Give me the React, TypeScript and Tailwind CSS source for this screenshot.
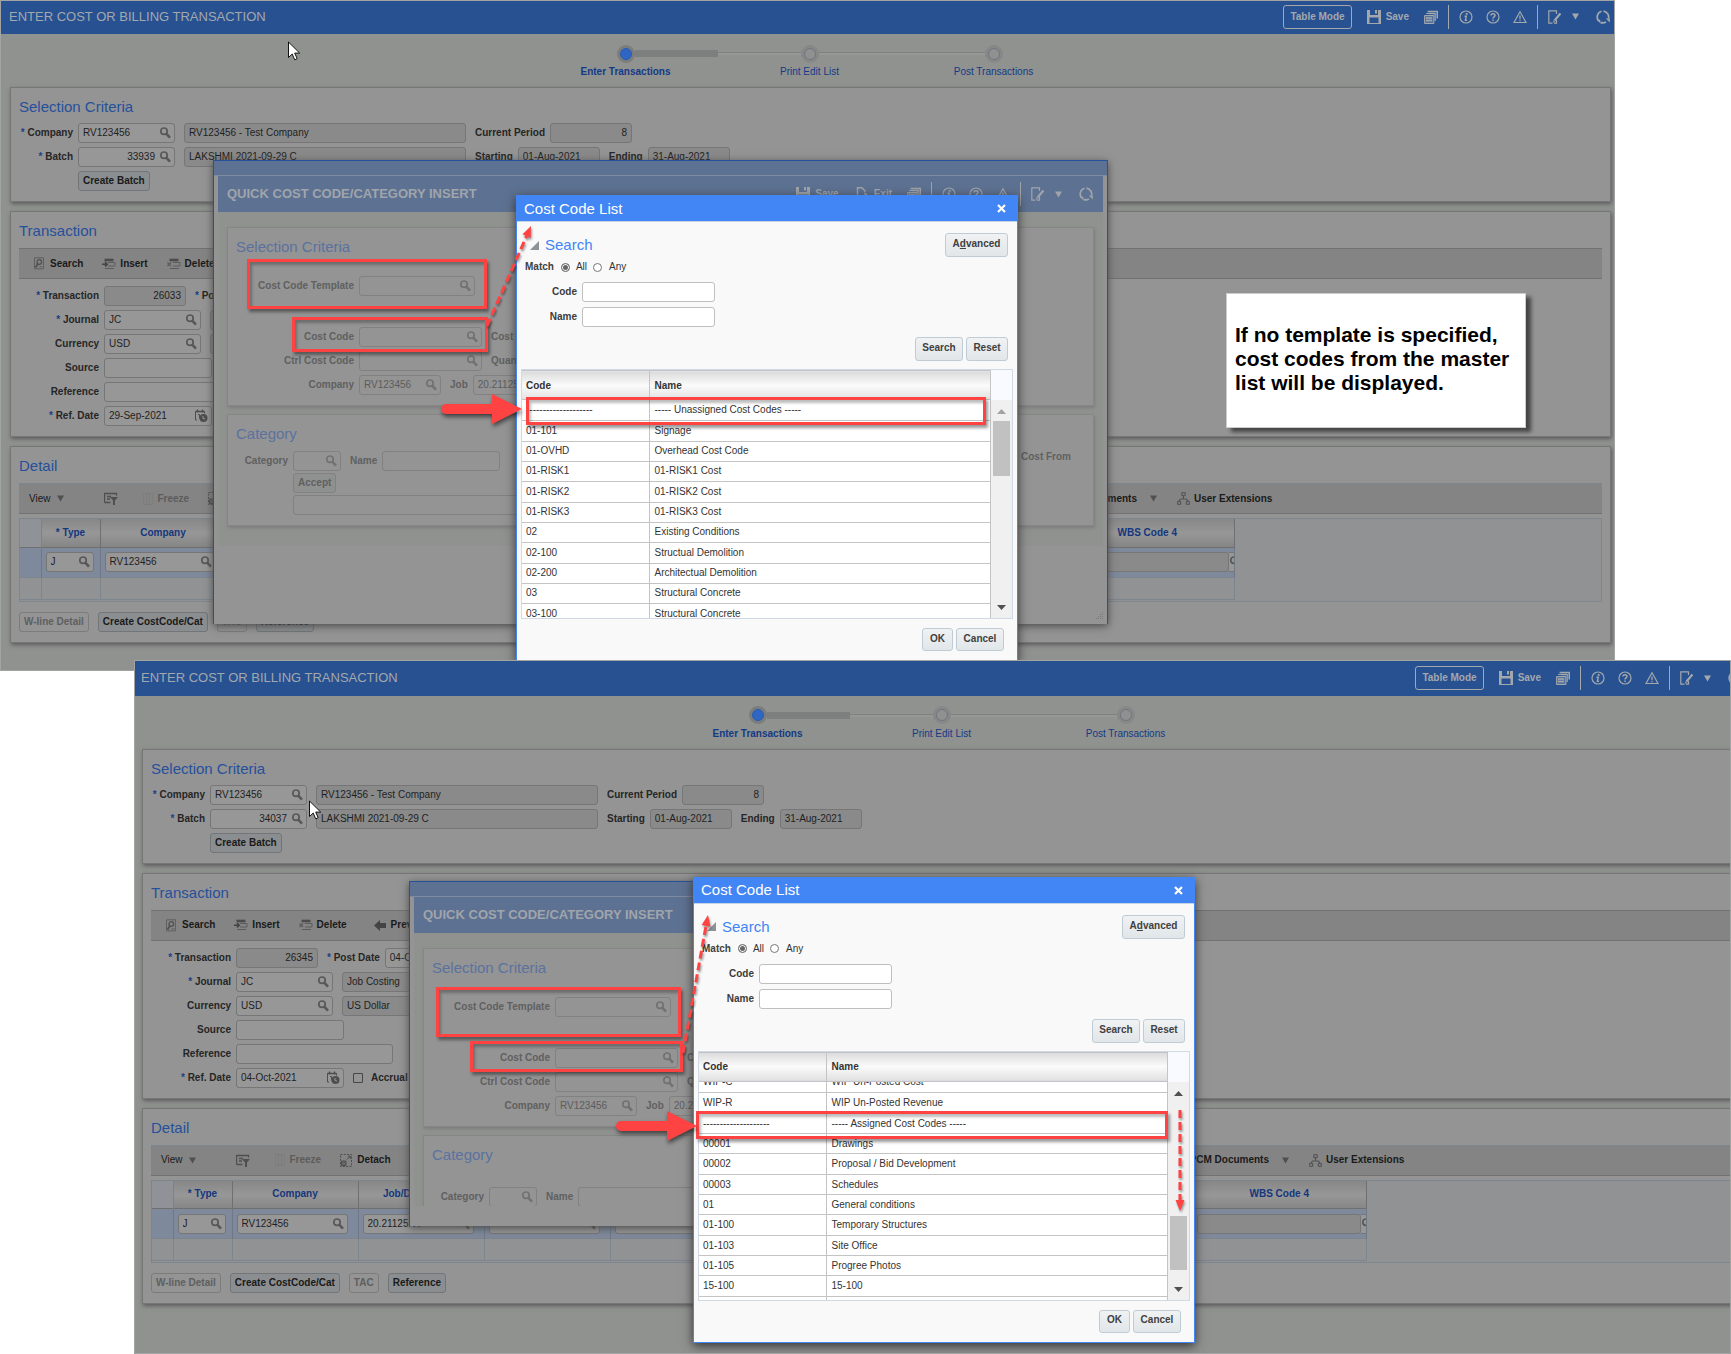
import React, { useId } from 'react';
import clsx from 'clsx';

/* ---------- icons ---------- */

const SearchIcon = ({ className = 'text-[#585858]' }: { className?: string }) => (
  <svg width="12" height="12" viewBox="0 0 12 12" className={clsx('shrink-0', className)} fill="none" stroke="currentColor">
    <circle cx="5" cy="4.200" r="3.200" strokeWidth="1.700" />
    <path d="M7.200 6.600 11 10.600" strokeWidth="2.600" />
  </svg>
);

const CalendarIcon = () => (
  <svg width="14" height="14" viewBox="0 0 14 14" className="shrink-0 text-[#4e4e4e]" fill="none" stroke="currentColor">
    <path d="M3 11H1.500V2.500h9v2" />
    <path d="M1.500 2.500h9M3.500.5v3M8.500.5v3" strokeWidth="1.500" />
    <path d="M4 5.500h1.500v4" />
    <circle cx="9.500" cy="9" r="4" fill="currentColor" stroke="none" />
    <path d="M9 7v2.300l2 .8" stroke="#999" />
  </svg>
);

const SaveIcon = () => (
  <svg width="14" height="14" viewBox="0 0 14 14" fill="currentColor">
    <path fillRule="evenodd" d="M0 0h14v14H0zM3 0v5h8V0h-1v3.500H8V0zM2.500 7.500V13h9V7.500z" />
  </svg>
);

const ExitIcon = () => (
  <svg width="14" height="14" viewBox="0 0 14 14" fill="none" stroke="currentColor">
    <path d="M9 5V4L6 .8H1.500v12.400H7" strokeWidth="1.400" />
    <path d="M5.500 8h3V5l5 4.500-5 4.500v-3h-3z" fill="currentColor" stroke="none" />
  </svg>
);

const StackIcon = () => (
  <svg width="14" height="14" viewBox="0 0 14 14" fill="none" stroke="currentColor">
    <path d="M3.500 1.500h9.800v7" strokeWidth="1.600" />
    <path d="M2.200 3.500h9v7.500" strokeWidth="1.200" />
    <path d="M.6 5.500h9.300v8H.6z" fill="currentColor" fillOpacity=".4" />
    <path d="M2 8h6M2 10.500h6M5 3.500h6" strokeWidth="1.300" />
  </svg>
);

const InfoIcon = () => (
  <svg width="14" height="14" viewBox="0 0 14 14" fill="none" stroke="currentColor">
    <circle cx="7" cy="7" r="6" strokeWidth="1.200" />
    <path d="M7.700 3v1.800" strokeWidth="1.900" />
    <path d="M5.500 6.200h1.800l-.9 4.200h1.700" strokeWidth="1.400" />
  </svg>
);

const HelpIcon = () => (
  <svg width="14" height="14" viewBox="0 0 14 14" fill="none" stroke="currentColor">
    <circle cx="7" cy="7" r="6" strokeWidth="1.200" />
    <path d="M5 5.500c0-2.500 4-2.300 4 0C9 7 7 6.800 7 8.500M7 9.500V11" strokeWidth="1.500" />
  </svg>
);

const WarnIcon = () => (
  <svg width="14" height="14" viewBox="0 0 14 14" fill="none" stroke="currentColor">
    <path d="M7 1.800 13 12.500H1z" strokeWidth="1.200" />
    <path d="M7 5.500v3.700M7 10v1.300" strokeWidth="1.300" />
  </svg>
);

const EditIcon = () => (
  <svg width="13" height="14" viewBox="0 0 13 14" fill="none" stroke="currentColor">
    <path d="M8.500 4V.8H.8v12.400h3.700M6 13.200h2.500V10" strokeWidth="1.200" />
    <path d="M12.500 3.500 6.500 10.500" strokeWidth="2.200" />
    <path d="M5 12.500l.5-2.300L7.300 12z" fill="currentColor" stroke="none" />
  </svg>
);

const RefreshIcon = () => (
  <svg width="14" height="14" viewBox="0 0 14 14" fill="none" stroke="currentColor">
    <path d="M2.800 11A5.900 5.900 0 0 1 5.500 1.300M7.500 1.200a5.900 5.900 0 0 1 5 7.300M10 12a5.900 5.900 0 0 1-5.500.4" strokeWidth="1.700" />
    <path d="M.8 9.800h3.500v3.500zM9.800 8.500h4v4z" fill="currentColor" stroke="none" />
  </svg>
);

const CaretDown = ({ className }: { className?: string }) => (
  <svg width="7" height="7" viewBox="0 0 7 7" className={className} fill="currentColor">
    <path d="M0 .5h7L3.500 6.500z" />
  </svg>
);

const FindIcon = () => (
  <svg width="12" height="13" viewBox="0 0 12 13" fill="none" stroke="#606060">
    <path d="M1.500.8h9v11h-9z" />
    <circle cx="6.300" cy="5" r="2.300" strokeWidth="1.300" stroke="#505050" />
    <path d="M4.800 7 2.500 10.500" strokeWidth="1.800" stroke="#505050" />
    <path d="M6.500 9.800h3" />
  </svg>
);

const RowIcon = ({ remove }: { remove?: boolean }) => (
  <svg width="14" height="12" viewBox="0 0 14 12" fill="none" stroke="#5c5c5c">
    <path d="M2.500 2h9" strokeWidth="2.600" stroke="#4c4c4c" />
    <path d="M6 4.500h7v3.500H6M3 10.500h9" />
    {remove ? <path d="M.5 4.500 4 8M4 4.500.5 8" strokeWidth="1.400" /> : <path d="M0 6.200h4.500M3 4l2.200 2.200L3 8.400" strokeWidth="1.600" stroke="#444" />}
  </svg>
);

const PrevIcon = () => (
  <svg width="12" height="11" viewBox="0 0 12 11" fill="#444">
    <path d="M0 5.500 6 0v3h6v5H6v3z" />
  </svg>
);

const FilterIcon = () => (
  <svg width="14" height="13" viewBox="0 0 14 13" fill="none" stroke="#4f4f4f">
    <path d="M.5 10.500V1.500h11M.5 1.500h12v2M3 4.500h4M3 7h3M.5 10.500h6" strokeWidth="1.300" />
    <path d="M6 5h8l-3 3.500V13H9V8.500z" fill="#4f4f4f" stroke="none" />
  </svg>
);

const FreezeIcon = () => (
  <svg width="10" height="12" viewBox="0 0 10 12" fill="none" stroke="#7b7b7b">
    <path d="M.5.5h9v11h-9zM3.500.5v11M6.500.5v11" strokeDasharray="2 1" />
  </svg>
);

const DetachIcon = () => (
  <svg width="12" height="13" viewBox="0 0 12 13" fill="none" stroke="#4f4f4f">
    <path d="M.5.5h11v12H.5z" strokeDasharray="2 1.300" />
    <path d="M1.500 7h4.500v4.500H1.500z" fill="#666" />
    <path d="M7 5.500 10 2.500M7.800 2.200h2.500v2.500" />
  </svg>
);

const TreeIcon = () => (
  <svg width="13" height="13" viewBox="0 0 13 13" fill="none" stroke="#4f4f4f">
    <path d="M4.800.7h3.400v3H4.800zM.7 9.300h3v3h-3zM9.300 9.300h3v3h-3zM6.500 3.700v3M2.200 9.300l1-2.300h6.600l1 2.300" />
  </svg>
);

/* ---------- fields ---------- */

type Tone = 'dim' | 'faded' | 'bright';

const labelTone: Record<Tone, string> = {
  dim: 'text-[#262626]',
  faded: 'text-[#606060]',
  bright: 'text-[#3c3c3c]',
};

const boxTone: Record<Tone, string> = {
  dim: 'border-[#767676] text-[#1f1f1f]',
  faded: 'border-[#818181] text-[#5c5c5c]',
  bright: 'border-[#bfbfbf] bg-white text-[#333]',
};

const Field: React.FC<{
  label?: string;
  name?: string;
  value?: string;
  width: string;
  labelWidth?: string;
  tone?: Tone;
  required?: boolean;
  right?: boolean;
  disabled?: boolean;
  icon?: 'search' | 'calendar';
}> = ({ label, name, value = '', width, labelWidth, tone = 'dim', required, right, disabled, icon }) => {
  const id = useId();
  return (
    <div className="flex shrink-0 items-center gap-[5px]">
      {label && (
        <label htmlFor={id} className={clsx('text-right font-bold whitespace-nowrap', labelWidth, labelTone[tone])}>
          {required && <span className="text-[#1c3f86]">* </span>}
          {label}
        </label>
      )}
      <div
        className={clsx(
          'flex h-5 items-center rounded-[3px] border pl-1',
          icon ? 'pr-[3px]' : 'pr-1',
          width,
          boxTone[tone],
          tone === 'dim' && (disabled ? 'bg-[#8a8a8a]' : 'bg-[#979797]')
        )}
      >
        <input
          id={id}
          aria-label={label ? undefined : name}
          defaultValue={value}
          readOnly={disabled}
          className={clsx('w-full min-w-0 bg-transparent outline-none', right && 'text-right', right && icon && 'pr-1')}
        />
        {icon === 'search' && <SearchIcon className={tone === 'faded' ? 'text-[#727272]' : 'text-[#585858]'} />}
        {icon === 'calendar' && <CalendarIcon />}
      </div>
    </div>
  );
};

const DimButton: React.FC<{ children: React.ReactNode; disabled?: boolean; faded?: boolean }> = ({ children, disabled, faded }) => (
  <button
    disabled={disabled}
    className={clsx(
      'h-5 shrink-0 rounded-[3px] border px-1 font-bold whitespace-nowrap',
      disabled && 'border-[#7c7c7c] text-[#5f5f5f]',
      faded && 'border-[#818181] bg-[#8f9191] text-[#606060]',
      !disabled && !faded && 'border-[#727678] bg-[#8b8e90] text-[#1a1a1a]'
    )}
  >
    {children}
  </button>
);

const Panel: React.FC<{ title: string; faded?: boolean; children: React.ReactNode }> = ({ title, faded, children }) => (
  <section
    className={clsx(
      'border bg-[#949494] px-2 pt-[9px] pb-[10px]',
      faded ? 'border-[#868686] shadow-[1px_2px_3px_#7d7d7d]' : 'border-[#767676] shadow-[1px_2px_4px_#5c5c5c]'
    )}
  >
    <h2 className={clsx('text-[15px] leading-5', faded ? 'text-[#5b729f]' : 'text-[#26509c]')}>{title}</h2>
    {children}
  </section>
);

const TitleTools: React.FC<{ exit?: boolean }> = ({ exit }) => (
  <div className="flex shrink-0 items-center font-bold">
    <button className="flex items-center gap-[5px]">
      <SaveIcon /> Save
    </button>
    {exit && (
      <button className="ml-[17px] flex items-center gap-1">
        <ExitIcon /> Exit
      </button>
    )}
    <button aria-label="Windows" className="mr-[10px] ml-[15px]"><StackIcon /></button>
    <span className="h-6 w-px bg-current" />
    <div className="mx-[10px] flex gap-[13px]">
      <button aria-label="Information"><InfoIcon /></button>
      <button aria-label="Help"><HelpIcon /></button>
      <button aria-label="Warnings"><WarnIcon /></button>
    </div>
    <span className="h-6 w-px bg-current" />
    <button aria-label="Edit" className="ml-[10px]"><EditIcon /></button>
    <button aria-label="More" className="mx-[11px]"><CaretDown /></button>
    <button aria-label="Refresh" className="ml-[6px]"><RefreshIcon /></button>
  </div>
);

/* ---------- main form ---------- */

const steps = ['Enter Transactions', 'Print Edit List', 'Post Transactions'];

const Train = () => (
  <ol className="flex h-[53px] justify-center pt-[10px] pl-1 text-[#143a86]">
    {steps.map((step, i) => (
      <li key={step} className="w-[184px] text-center">
        <div className="flex h-[19px] items-center">
          <span className={clsx('flex-1', i > 0 && 'h-[3px] border-t border-[#7f8180] bg-[#969896]')} />
          <span className={clsx('flex size-[18px] items-center justify-center rounded-full', i === 0 ? 'bg-[#7b7d7c]' : 'bg-[#868887]')}>
            <span className={clsx('size-3 rounded-full border', i === 0 ? 'border-[#2a5cae] bg-[#2f66c4]' : 'border-[#707480] bg-[#8f9190]')} />
          </span>
          <span
            className={clsx(
              'flex-1',
              i === 0 && 'h-[7px] bg-[#7d7f7e]',
              i === 1 && 'h-[3px] border-t border-[#7f8180] bg-[#969896]'
            )}
          />
        </div>
        <div className={clsx('mt-[3px] leading-3', i === 0 && 'font-bold')}>{step}</div>
      </li>
    ))}
  </ol>
);

interface FormData {
  batch: string;
  transaction: string;
  postDate: string;
  refDate: string;
}

const MainForm: React.FC<{ data: FormData; headerClass: string; bodyClass: string }> = ({ data, headerClass, bodyClass }) => (
  <div className="bg-[#909290]">
    <header className={clsx('flex items-center bg-[#275191] pr-[5px] pl-[9px] text-[#a3a8ad]', headerClass)}>
      <h1 className="text-[13px] whitespace-nowrap">ENTER COST OR BILLING TRANSACTION</h1>
      <button className="mr-[15px] ml-auto h-6 shrink-0 rounded-[3px] border border-[#a3a8ad] px-[6px] font-bold">Table Mode</button>
      <TitleTools />
    </header>
    <Train />
    <div className={clsx('flex flex-col gap-[9px] pr-1 pl-[10px]', bodyClass)}>
      <Panel title="Selection Criteria">
        <div className="mt-[6px] flex flex-col gap-1">
          <div className="flex gap-[9px]">
            <Field label="Company" required labelWidth="w-[54px]" width="w-[97px]" value="RV123456" icon="search" />
            <Field name="Company name" width="w-[282px]" value="RV123456 - Test Company" disabled />
            <Field label="Current Period" width="w-[82px]" value="8" right disabled />
          </div>
          <div className="flex gap-[9px]">
            <Field label="Batch" required labelWidth="w-[54px]" width="w-[97px]" value={data.batch} right icon="search" />
            <Field name="Batch name" width="w-[282px]" value="LAKSHMI 2021-09-29 C" disabled />
            <Field label="Starting" width="w-[82px]" value="01-Aug-2021" disabled />
            <Field label="Ending" width="w-[82px]" value="31-Aug-2021" disabled />
          </div>
          <div className="flex pl-[59px]">
            <DimButton>Create Batch</DimButton>
          </div>
        </div>
      </Panel>

      <Panel title="Transaction">
        <div className="mt-[7px] flex h-[31px] items-center gap-[19px] border-y border-[#727272] bg-[#848484] pl-[14px] font-bold text-[#1a1a1a]">
          <button className="flex items-center gap-[5px]"><FindIcon /> Search</button>
          <button className="flex items-center gap-1"><RowIcon /> Insert</button>
          <button className="flex items-center gap-1"><RowIcon remove /> Delete</button>
          <button className="ml-2 flex items-center gap-[5px]"><PrevIcon /> Prev</button>
        </div>
        <div className="mt-[7px] flex flex-col gap-1">
          <div className="flex gap-[9px]">
            <Field label="Transaction" required labelWidth="w-[80px]" width="w-[82px]" value={data.transaction} right disabled />
            <Field label="Post Date" required width="w-[108px]" value={data.postDate} icon="calendar" />
          </div>
          <div className="flex gap-[9px]">
            <Field label="Journal" required labelWidth="w-[80px]" width="w-[97px]" value="JC" icon="search" />
            <Field name="Journal name" width="w-[157px]" value="Job Costing" disabled />
          </div>
          <div className="flex gap-[9px]">
            <Field label="Currency" labelWidth="w-[80px]" width="w-[97px]" value="USD" icon="search" />
            <Field name="Currency name" width="w-[157px]" value="US Dollar" disabled />
          </div>
          <Field label="Source" labelWidth="w-[80px]" width="w-[108px]" />
          <Field label="Reference" labelWidth="w-[80px]" width="w-[157px]" />
          <div className="flex gap-[9px]">
            <Field label="Ref. Date" required labelWidth="w-[80px]" width="w-[108px]" value={data.refDate} icon="calendar" />
            <label className="flex items-center gap-2 font-bold text-[#262626]">
              <input type="checkbox" className="size-[10px] appearance-none rounded-[1px] border border-[#444]" />
              Accrual
            </label>
          </div>
        </div>
      </Panel>

      <Panel title="Detail">
        <div className="mt-[7px] flex h-[31px] items-center border-t border-b border-t-[#7c8690] border-b-[#727272] bg-[#848484] pl-[10px] font-bold text-[#1a1a1a]">
          <button className="flex items-center gap-[6px] font-normal">
            View <CaretDown className="text-[#505050]" />
          </button>
          <button aria-label="Filter" className="ml-10"><FilterIcon /></button>
          <button disabled className="ml-[25px] flex items-center gap-[5px] text-[#5c5c5c]"><FreezeIcon /> Freeze</button>
          <button className="ml-[19px] flex items-center gap-[5px]"><DetachIcon /> Detach</button>
          <button className="ml-[799px] flex items-center gap-[13px] whitespace-nowrap">
            PCM Documents <CaretDown className="text-[#505050]" />
          </button>
          <button className="ml-5 flex items-center gap-1 whitespace-nowrap"><TreeIcon /> User Extensions</button>
        </div>
        <DetailTable />
        <div className="mt-[10px] flex gap-[9px]">
          <DimButton disabled>W-line Detail</DimButton>
          <DimButton>Create CostCode/Cat</DimButton>
          <DimButton disabled>TAC</DimButton>
          <DimButton>Reference</DimButton>
        </div>
      </Panel>
    </div>
  </div>
);

const detailColumns = [
  { title: '* Type', width: 'w-[59px]', field: 'w-[48px]', value: 'J' },
  { title: 'Company', width: 'w-[126px]', field: 'w-[111px]', value: 'RV123456' },
  { title: 'Job/Department', width: 'w-[126px]', field: 'w-[111px]', value: '20.21125NV' },
  { title: 'Cost Code', width: 'w-[126px]', field: 'w-[111px]', value: '' },
  { title: 'Category', width: 'w-[126px]', field: 'w-[111px]', value: '' },
  { title: 'WBS Code 1', width: 'w-[152px]', field: 'w-[137px]', value: '' },
  { title: 'WBS Code 2', width: 'w-[152px]', field: 'w-[137px]', value: '' },
  { title: 'WBS Code 3', width: 'w-[152px]', field: 'w-[137px]', value: '' },
];

const DetailTable = () => (
  <div className="mt-1 border border-[#7d858e] bg-[#909294] pb-px">
    <table className="w-[1215px] table-fixed border-collapse">
      <thead>
        <tr className="h-7 bg-linear-to-b from-[#878787] via-[#979797] to-[#858585] text-[#14367e]">
          <th className="w-[21px] border-r border-[#7b8289] bg-[#8f9296]" />
          {detailColumns.map((c) => (
            <th key={c.title} className={clsx('border-r border-[#6f6f6f]', c.width)}>{c.title}</th>
          ))}
          <th className="border-r border-[#6f6f6f]">WBS Code 4</th>
        </tr>
      </thead>
      <tbody>
        <tr className="h-[30px] border-t border-[#6f6f6f] bg-[#7e899b]">
          <td className="border-r border-[#6f7884]" />
          {detailColumns.map((c) => (
            <td key={c.title} className="border-r border-[#6f7884] pl-1">
              <Field name={c.title} width={c.field} value={c.value} icon="search" />
            </td>
          ))}
          <td className="border-r border-[#6f7884] pl-1">
            <div className="flex overflow-hidden">
              <Field name="WBS Code 4" width="w-[164px]" disabled />
              <span className="flex h-5 items-center border-y border-[#767676] bg-[#979797]"><SearchIcon /></span>
            </div>
          </td>
        </tr>
        <tr className="h-[22px] border-y border-[#7d858e]">
          <td className="border-r border-[#7d858e]" />
          {detailColumns.map((c) => (
            <td key={c.title} className="border-r border-[#7d858e]" />
          ))}
          <td className="border-r border-[#7d858e]" />
        </tr>
      </tbody>
    </table>
  </div>
);

/* ---------- quick insert dialog ---------- */

const QuickInsert: React.FC<{ className: string; viewClass?: string; categoryGap: string; job: string }> = ({
  className,
  viewClass,
  categoryGap,
  job,
}) => (
  <div
    role="dialog"
    aria-label="Quick Cost Code/Category Insert"
    className={clsx('absolute overflow-hidden border-x border-t border-[#26529c] bg-[#949494] shadow-[0_2px_8px_#4a4a4a]', className)}
  >
    <div className="h-[15px] border-b border-[#7f8ba0] bg-[#5d7192]" />
    <div className={clsx('mx-1 overflow-hidden bg-[#909290]', viewClass)}>
      <header className="flex h-9 items-center justify-between bg-[#5d7192] pr-[10px] pl-[9px] text-[#a0a5ab]">
        <h2 className="text-[13px] font-bold whitespace-nowrap">QUICK COST CODE/CATEGORY INSERT</h2>
        <TitleTools exit />
      </header>
      <div className="flex flex-col gap-2 px-[9px] pt-[15px] pb-5">
        <Panel title="Selection Criteria" faded>
          <div className="mt-[19px] flex">
            <Field tone="faded" label="Cost Code Template" labelWidth="w-[118px]" width="w-[116px]" icon="search" />
          </div>
          <div className="mt-[31px] flex flex-col gap-1">
            <div className="flex gap-[9px]">
              <Field tone="faded" label="Cost Code" labelWidth="w-[118px]" width="w-[123px]" icon="search" />
              <Field tone="faded" label="Cost Code Name" width="w-[157px]" />
            </div>
            <div className="flex gap-[9px]">
              <Field tone="faded" label="Ctrl Cost Code" labelWidth="w-[118px]" width="w-[123px]" icon="search" />
              <Field tone="faded" label="Quantity" width="w-[82px]" />
            </div>
            <div className="flex gap-[9px]">
              <Field tone="faded" label="Company" labelWidth="w-[118px]" width="w-[82px]" value="RV123456" icon="search" />
              <Field tone="faded" label="Job" width="w-[97px]" value={job} icon="search" />
            </div>
          </div>
        </Panel>
        <Panel title="Category" faded>
          <div className={clsx('flex flex-col gap-0.5', categoryGap)}>
            <div className="flex gap-[9px]">
              <Field tone="faded" label="Category" labelWidth="w-[52px]" width="w-[48px]" icon="search" />
              <Field tone="faded" label="Name" width="w-[118px]" />
              <span className="mr-[14px] ml-auto leading-3 font-bold text-[#606060]">Cost From</span>
            </div>
            <div className="flex pl-[57px]">
              <DimButton faded>Accept</DimButton>
            </div>
            <div className="flex pl-[52px]">
              <Field tone="faded" name="Message" width="ml-[5px] w-[400px]" />
            </div>
          </div>
        </Panel>
      </div>
    </div>
    <svg width="8" height="8" viewBox="0 0 8 8" className="absolute right-1 bottom-1" stroke="#7a7a7a" strokeDasharray="1 1">
      <path d="M7.500 0v8M5.500 2v6M3.500 4v4M1.500 6v2" />
    </svg>
  </div>
);

/* ---------- cost code list ---------- */

const LightButton: React.FC<{ children: React.ReactNode; className?: string }> = ({ children, className }) => (
  <button
    className={clsx(
      'rounded-[3px] border border-[#c0ccd5] bg-linear-to-b from-[#f0f2f3] to-[#e1e6e9] pb-0.5 font-bold text-[#404040]',
      className
    )}
  >
    {children}
  </button>
);

const CostCodeList: React.FC<{
  className: string;
  rows: string[][];
  bodyOffset?: string;
  thumb: string;
  atTop?: boolean;
}> = ({ className, rows, bodyOffset, thumb, atTop }) => {
  const id = useId();
  return (
    <div
      role="dialog"
      aria-label="Cost Code List"
      className={clsx('absolute h-[466px] w-[502px] border border-[#4285f4] bg-[#f9f9f9] text-[#333] shadow-[0_3px_10px_#333]', className)}
    >
      <header className="flex h-[26px] items-center justify-between border-b border-[#c5d3e6] bg-[#4285f4] pr-[11px] pl-[7px] text-white">
        <h2 className="text-[15px]">Cost Code List</h2>
        <button aria-label="Close">
          <svg width="9" height="9" viewBox="0 0 9 9" stroke="white" strokeWidth="2.200">
            <path d="M1 1 8 8M8 1 1 8" />
          </svg>
        </button>
      </header>
      <div className="flex justify-between pt-[11px] pr-[9px] pl-[13px]">
        <h3 className="flex h-6 items-center gap-[6px] text-[15px] text-[#4285f4]">
          <svg width="9" height="9" viewBox="0 0 9 9" className="text-[#8d9296]">
            <path d="M9 0v9H0z" fill="currentColor" />
          </svg>
          Search
        </h3>
        <LightButton className="h-6 w-[63px]">
          A<u>d</u>vanced
        </LightButton>
      </div>
      <fieldset className="mt-1 flex h-3 items-center pl-2">
        <legend className="float-left mr-[7px] font-bold text-[#404040]">Match</legend>
        <label className="flex items-center gap-[6px]">
          <input type="radio" name={id} defaultChecked className="size-[9px] appearance-none rounded-full border border-[#777] bg-[#666] shadow-[inset_0_0_0_1px_white]" />
          All
        </label>
        <label className="ml-[6px] flex items-center gap-[7px]">
          <input type="radio" name={id} className="size-[9px] appearance-none rounded-full border border-[#777] bg-white" />
          Any
        </label>
      </fieldset>
      <div className="mt-[9px] flex flex-col gap-[5px] pl-2">
        <Field tone="bright" label="Code" labelWidth="w-[52px]" width="w-[133px]" />
        <Field tone="bright" label="Name" labelWidth="w-[52px]" width="w-[133px]" />
      </div>
      <div className="mt-[10px] flex justify-end gap-[3px] pr-[9px]">
        <LightButton className="h-6 w-12">Search</LightButton>
        <LightButton className="h-6 w-[42px]">Reset</LightButton>
      </div>

      <div className="mt-2 mr-1 ml-1 flex h-[250px] border border-[#cfdae4] bg-white">
        <div className="flex min-w-0 flex-1 flex-col border-r border-[#c4c4c4]">
          <table className="w-full table-fixed text-left">
            <thead>
              <tr className="h-[29px] border-y border-[#c0c4c8] bg-linear-to-b from-[#dcdcdc] via-[#fbfbfb] to-[#e2e2e2]">
                <th className="w-[127px] border-r border-[#c4c4c4] pt-px pl-1">Code</th>
                <th className="pt-px pl-[5px]">Name</th>
              </tr>
            </thead>
          </table>
          <div className="min-h-0 flex-1 overflow-hidden">
            <table className={clsx('w-full table-fixed', bodyOffset)}>
              <tbody>
                {rows.map(([code, name], i) => (
                  <tr key={i} className="h-5 border-b border-[#c4c4c4] nth-[3n+2]:h-[21px]">
                    <td className="w-[127px] border-r border-[#c4c4c4] pl-1">{code}</td>
                    <td className="pl-[5px]">{name}</td>
                  </tr>
                ))}
              </tbody>
            </table>
          </div>
        </div>
        <div className="flex w-[21px] flex-col bg-[#f0f0f0]">
          <div className="h-[30px] bg-[#f8faff]" />
          <div className="flex min-h-0 flex-1 flex-col items-center pt-[9px] pb-2">
            <svg width="9" height="5" viewBox="0 0 9 5" className={atTop ? 'text-[#a3a3a3]' : 'text-[#505050]'}>
              <path d="M0 5 4.500 0 9 5z" fill="currentColor" />
            </svg>
            <span className={clsx('w-[17px] bg-[#c1c1c1]', thumb)} />
            <svg width="9" height="5" viewBox="0 0 9 5" className="mt-auto text-[#505050]">
              <path d="M0 0 4.500 5 9 0z" fill="currentColor" />
            </svg>
          </div>
        </div>
      </div>

      <div className="mt-[9px] flex justify-end gap-[3px] pr-[13px]">
        <LightButton className="h-[23px] w-[31px]">OK</LightButton>
        <LightButton className="h-[23px] w-12">Cancel</LightButton>
      </div>
    </div>
  );
};

/* ---------- annotations ---------- */

const Highlight = ({ className }: { className: string }) => (
  <div className={clsx('absolute border-3 border-[#ff4343] shadow-[2px_3px_3px_#0006,inset_2px_3px_3px_#0004]', className)} />
);

const BlockArrow = ({ className }: { className: string }) => (
  <svg width="86" height="38" viewBox="0 0 86 38" className={clsx('absolute drop-shadow-[1px_3px_2px_#0008]', className)} fill="#ff4343">
    <path d="M5 10h46V0l30 15-30 15V20H5a5 5 0 0 1 0-10z" />
  </svg>
);

/* dashed line from the origin, ending in a triangular head at dx/dy */
const DashedArrow: React.FC<{ className: string; dx: number; dy: number }> = ({ className, dx, dy }) => {
  const len = Math.hypot(dx, dy);
  const angle = (Math.atan2(dy, dx) * 180) / Math.PI;
  return (
    <svg width="1" height="1" className={clsx('absolute overflow-visible drop-shadow-[1px_2px_1px_#0006]', className)}>
      <g transform={`rotate(${angle})`}>
        <path d={`M0 0H${len - 10}`} stroke="#ff4343" strokeWidth="3" strokeDasharray="8 4" />
        <path d={`M${len - 11} -4.500 ${len} 0 ${len - 11} 4.500z`} fill="#ff4343" />
      </g>
    </svg>
  );
};

const Cursor = ({ className }: { className: string }) => (
  <svg width="13" height="20" viewBox="0 0 13 20" className={clsx('absolute', className)}>
    <path d="M.5 1v15.500l3.700-3.500 2.500 5.800 2.500-1.100-2.500-5.600h5z" fill="white" stroke="#111" />
  </svg>
);

const dashes = '--------------------';

const unassigned = [
  [dashes, '----- Unassigned Cost Codes -----'],
  ['01-101', 'Signage'],
  ['01-OVHD', 'Overhead Cost Code'],
  ['01-RISK1', '01-RISK1 Cost'],
  ['01-RISK2', '01-RISK2 Cost'],
  ['01-RISK3', '01-RISK3 Cost'],
  ['02', 'Existing Conditions'],
  ['02-100', 'Structual Demolition'],
  ['02-200', 'Architectual Demolition'],
  ['03', 'Structural Concrete'],
  ['03-100', 'Structural Concrete'],
];

const assigned = [
  ['WIP-C', 'WIP Un-Posted Cost'],
  ['WIP-R', 'WIP Un-Posted Revenue'],
  [dashes, '----- Assigned Cost Codes -----'],
  ['00001', 'Drawings'],
  ['00002', 'Proposal / Bid Development'],
  ['00003', 'Schedules'],
  ['01', 'General conditions'],
  ['01-100', 'Temporary Structures'],
  ['01-103', 'Site Office'],
  ['01-105', 'Progree Photos'],
  ['15-100', '15-100'],
  ['', ''],
];

export default function App() {
  return (
    <main className="relative overflow-hidden bg-white font-['Liberation_Sans',Arial,sans-serif] text-[10px] leading-3">
      <div className="relative mr-[116px] overflow-hidden border border-[#a2a4a3]">
        <div className="-mx-px">
          <MainForm
            data={{ batch: '33939', transaction: '26033', postDate: '29-Sep-2021', refDate: '29-Sep-2021' }}
            headerClass="h-[33px] pb-0.5"
            bodyClass="pb-[27px]"
          />
        </div>
        <QuickInsert className="top-[159px] left-[212px] h-[464px] w-[895px]" categoryGap="mt-[7px]" job="20.21125NV" />
        <CostCodeList className="top-[194px] left-[515px]" rows={unassigned} thumb="mt-[7px] h-[55px]" atTop />
        <Cursor className="top-10 left-[287px]" />
        <Highlight className="top-[258px] left-[246px] h-[50px] w-[240px]" />
        <Highlight className="top-[316px] left-[291px] h-[35px] w-[196px]" />
        <Highlight className="top-[396px] left-[525px] h-[28px] w-[460px]" />
        <BlockArrow className="top-[393px] left-[440px]" />
        <DashedArrow className="top-[325px] left-[486px]" dx={44} dy={-100} />
        <aside className="absolute top-[292px] left-[1225px] flex h-[135px] w-[300px] items-center border border-[#ccc] bg-white pb-1 pl-2 text-[21px] leading-6 font-bold text-black shadow-[5px_4px_4px_#444]">
          <p>
            If no template is specified,
            <br />
            cost codes from the master
            <br />
            list will be displayed.
          </p>
        </aside>
      </div>

      <div className="relative z-10 -mt-[11px] ml-[134px] overflow-hidden border border-[#a2a4a3]">
        <div className="-mr-[17px] -ml-[3px]">
          <MainForm
            data={{ batch: '34037', transaction: '26345', postDate: '04-Oct-2021', refDate: '04-Oct-2021' }}
            headerClass="h-[35px]"
            bodyClass="pb-[49px]"
          />
        </div>
        <QuickInsert className="top-[220px] left-[274px] h-[345px] w-[760px]" viewClass="h-[309px]" categoryGap="mt-[22px]" job="20.21125NV" />
        <CostCodeList className="top-[216px] left-[558px]" rows={assigned} bodyOffset="-mt-[9px]" thumb="mt-[120px] h-[54px]" />
        <Cursor className="top-[139px] left-[174px]" />
        <Highlight className="top-[326px] left-[301px] h-[50px] w-[245px]" />
        <Highlight className="top-[380px] left-[335px] h-[31px] w-[213px]" />
        <Highlight className="top-[450px] left-[561px] h-[28px] w-[472px]" />
        <BlockArrow className="top-[450px] left-[481px]" />
        <DashedArrow className="top-[392px] left-[548px]" dx={25} dy={-138} />
        <DashedArrow className="top-[449px] left-[1045px]" dx={0} dy={101} />
      </div>
    </main>
  );
}
